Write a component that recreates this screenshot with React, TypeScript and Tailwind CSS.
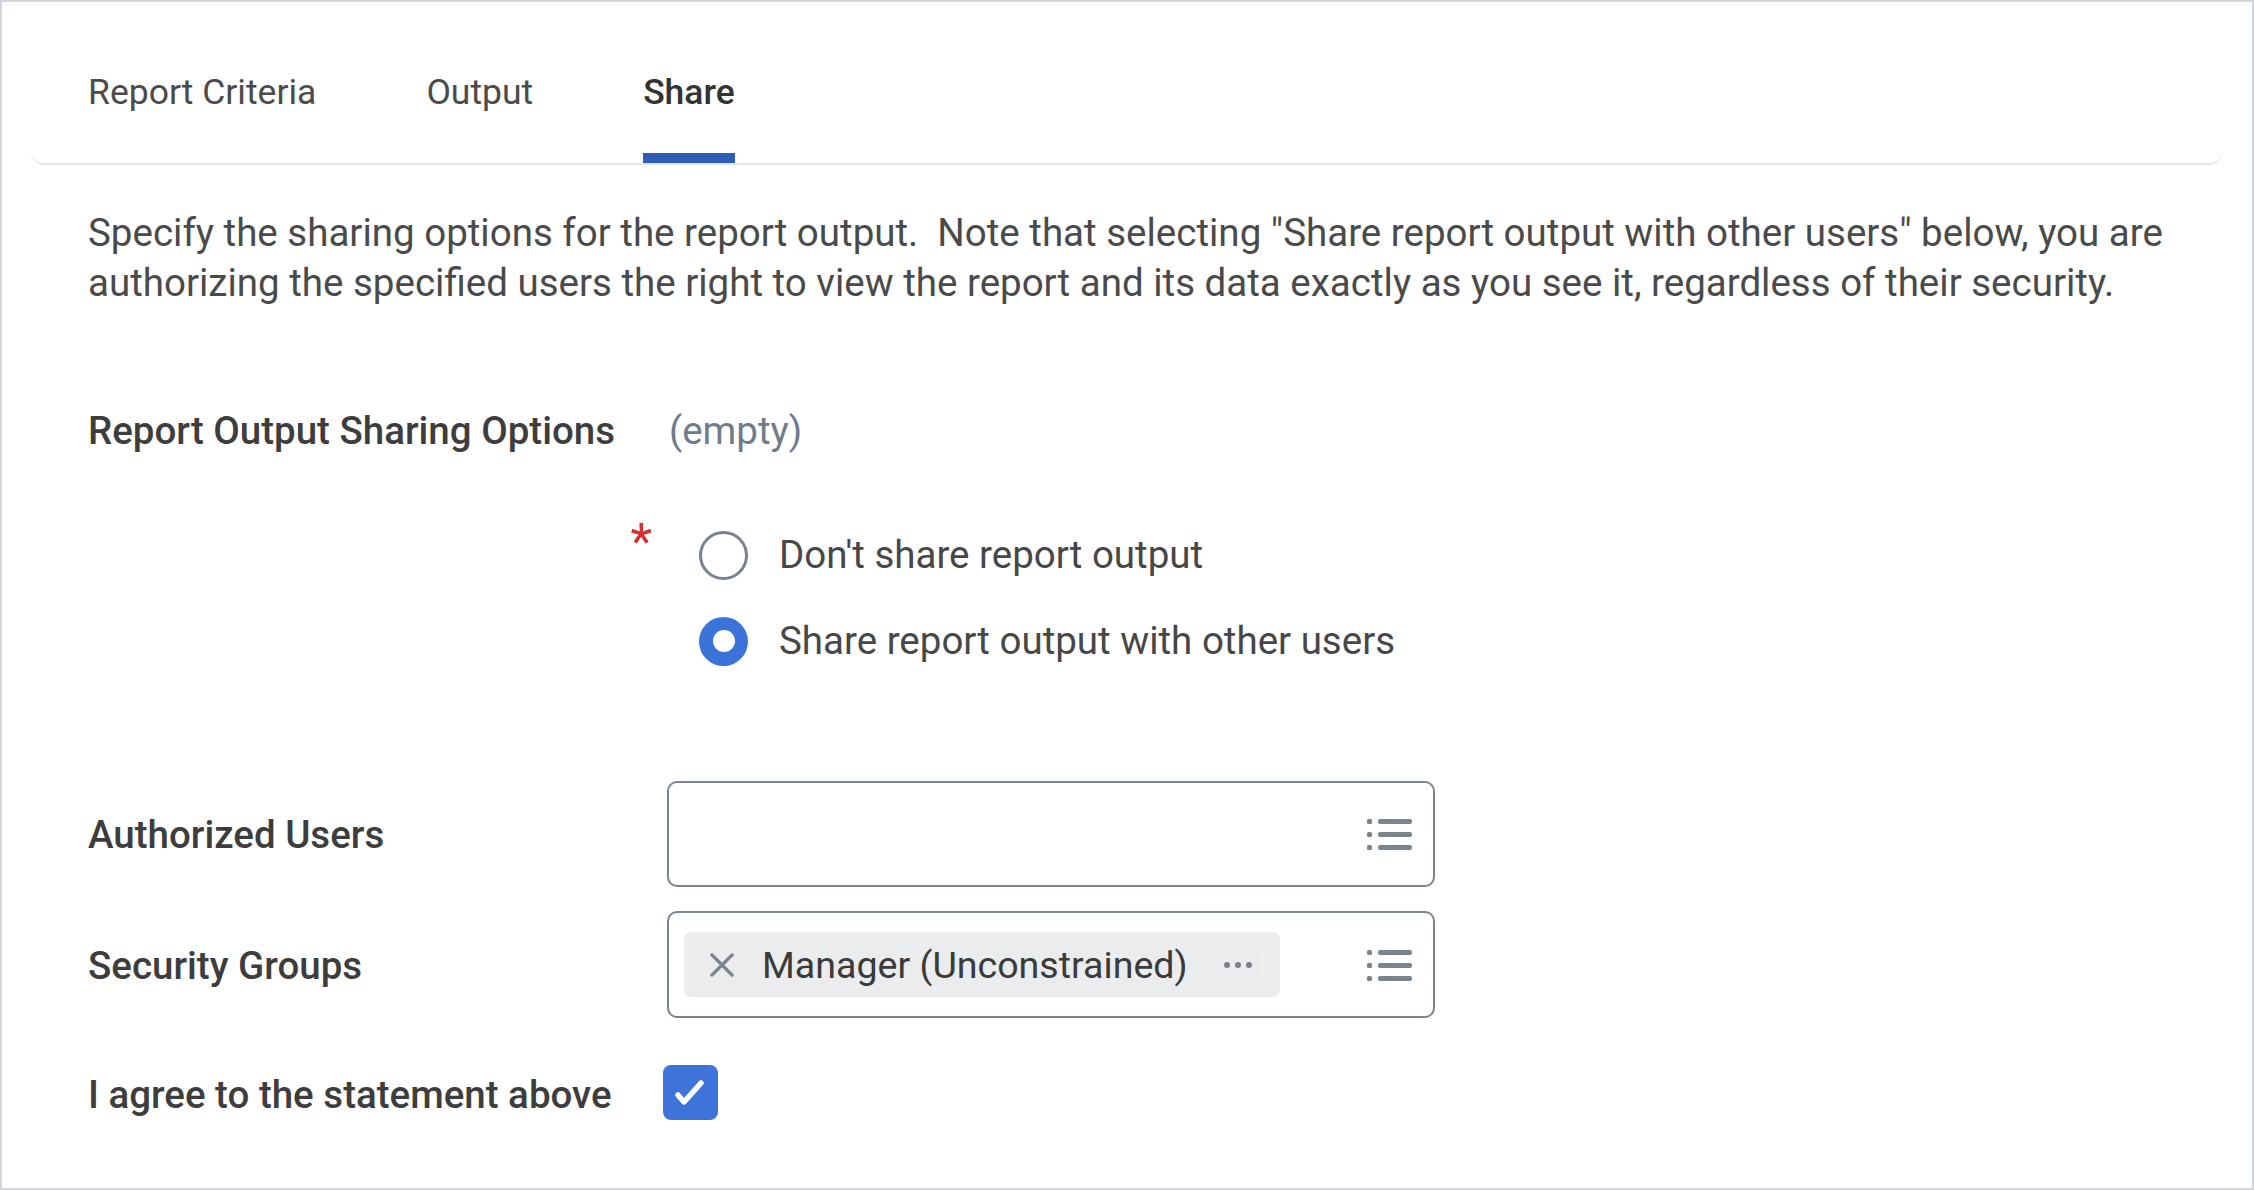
import React, { useState } from 'react';

type TabKey = 'criteria' | 'output' | 'share';

const tabs: { key: TabKey; label: string }[] = [
  { key: 'criteria', label: 'Report Criteria' },
  { key: 'output', label: 'Output' },
  { key: 'share', label: 'Share' },
];

const ListIcon: React.FC = () => (
  <svg width="45" height="34" viewBox="0 0 45 34" className="shrink-0">
    <rect x="0" y="2" width="5" height="5" rx="1.5" fill="#7b838d" />
    <rect x="11" y="2" width="34" height="5" rx="2" fill="#7b838d" />
    <rect x="0" y="15" width="5" height="5" rx="1.5" fill="#7b838d" />
    <rect x="11" y="15" width="34" height="5" rx="2" fill="#7b838d" />
    <rect x="0" y="28" width="5" height="5" rx="1.5" fill="#7b838d" />
    <rect x="11" y="28" width="34" height="5" rx="2" fill="#7b838d" />
  </svg>
);

const Radio: React.FC<{ checked: boolean }> = ({ checked }) =>
  checked ? (
    <span className="flex h-[49px] w-[49px] shrink-0 items-center justify-center rounded-full bg-[#3b73d9]">
      <span className="h-[22px] w-[22px] rounded-full bg-white" />
    </span>
  ) : (
    <span className="h-[49px] w-[49px] shrink-0 rounded-full border-[3px] border-[#7a828c]" />
  );

const App: React.FC = () => {
  const [tab, setTab] = useState<TabKey>('share');
  const [sharing, setSharing] = useState<'none' | 'share'>('share');
  const [agreed, setAgreed] = useState(true);

  return (
    <div className="h-screen w-full overflow-hidden border-2 border-[#d0d5db] bg-white font-['Roboto',sans-serif] text-[#474747]">
      {/* tab bar */}
      <div className="mx-[29px] flex h-[163px] items-stretch gap-[110px] rounded-b-[14px] border-b-2 border-[#e3e5e8] pl-[57px]">
        {tabs.map(t => (
          <button
            key={t.key}
            onClick={() => setTab(t.key)}
            className="flex flex-col justify-end"
          >
            <span
              className={`text-[35.5px] leading-[44px] ${tab === t.key ? 'font-medium text-[#333333]' : 'text-[#4b4b4b]'}`}
            >
              {t.label}
            </span>
            <span className={`mt-[39px] h-[10px] w-full ${tab === t.key ? 'bg-[#2f5cb8]' : 'bg-transparent'}`} />
          </button>
        ))}
      </div>

      <div className="pl-[86px]">
        <p className="mt-[43px] text-[38.5px] leading-[50px] text-[#4a4a4a]">
          Specify the sharing options for the report output.&nbsp; Note that selecting "Share report output with other users" below, you are
          <br />
          authorizing the specified users the right to view the report and its data exactly as you see it, regardless of their security.
        </p>

        {/* sharing options */}
        <div className="mt-[101px] flex h-[44px] items-center">
          <div className="w-[579px] text-[38.5px] font-medium leading-[44px] text-[#3d3d3d]">Report Output Sharing Options</div>
          <div className="pl-[2px] text-[38.5px] leading-[44px] text-[#6f7c8b]">(empty)</div>
        </div>

        <div className="mt-[59px] flex">
          <div className="flex w-[579px] justify-end pr-[15px] pt-[5px]">
            <span className="text-[50px] leading-[50px] text-[#d32f2f]">*</span>
          </div>
          <div className="flex flex-col pl-[32px]">
            <label className="flex h-[86px] cursor-pointer items-center gap-[31px]" onClick={() => setSharing('none')}>
              <Radio checked={sharing === 'none'} />
              <span className="text-[38.5px] leading-[44px] text-[#474747]">Don't share report output</span>
            </label>
            <label className="flex h-[86px] cursor-pointer items-center gap-[31px]" onClick={() => setSharing('share')}>
              <Radio checked={sharing === 'share'} />
              <span className="text-[38.5px] leading-[44px] text-[#474747]">Share report output with other users</span>
            </label>
          </div>
        </div>

        {/* authorized users */}
        <div className="mt-[97px] flex items-center">
          <div className="w-[579px] pt-[2px] text-[38.5px] font-medium leading-[44px] text-[#3d3d3d]">Authorized Users</div>
          <div className="flex h-[106px] w-[768px] items-center justify-end rounded-[10px] border-2 border-[#7d848e] pr-[21px]">
            <ListIcon />
          </div>
        </div>

        {/* security groups */}
        <div className="mt-[24px] flex items-center">
          <div className="w-[579px] pt-[2px] text-[38.5px] font-medium leading-[44px] text-[#3d3d3d]">Security Groups</div>
          <div className="flex h-[107px] w-[768px] items-center justify-between rounded-[10px] border-2 border-[#7d848e] pl-[15px] pr-[21px]">
            <div className="flex h-[65px] w-[596px] items-center rounded-[7px] bg-[#ebecee] pl-[26px] pr-[17px]">
              <svg width="24" height="24" viewBox="0 0 24 24" className="shrink-0">
                <path d="M2 2 L22 22 M22 2 L2 22" stroke="#7b8490" strokeWidth="3.2" strokeLinecap="square" />
              </svg>
              <span className="ml-[28px] flex-1 text-[37.6px] leading-[44px] text-[#3a3a3a]">Manager (Unconstrained)</span>
              <span className="flex h-[30px] w-[50px] items-center justify-center gap-[5px] rounded-[4px] border border-[#f2f3f4]">
                <span className="h-[6px] w-[6px] rounded-full bg-[#7a818b]" />
                <span className="h-[6px] w-[6px] rounded-full bg-[#7a818b]" />
                <span className="h-[6px] w-[6px] rounded-full bg-[#7a818b]" />
              </span>
            </div>
            <ListIcon />
          </div>
        </div>

        {/* agreement */}
        <div className="mt-[47px] flex items-center">
          <div className="w-[575px] pt-[4px] text-[38.5px] font-medium leading-[44px] text-[#3d3d3d]">I agree to the statement above</div>
          <button
            onClick={() => setAgreed(!agreed)}
            className={`flex h-[55px] w-[55px] items-center justify-center rounded-[8px] ${agreed ? 'bg-[#3e74d9]' : 'border-2 border-[#7a828c] bg-white'}`}
          >
            {agreed && (
              <svg width="55" height="55" viewBox="0 0 55 55">
                <path d="M15 30 L21 37 L38 18" fill="none" stroke="white" strokeWidth="5.5" strokeLinecap="round" strokeLinejoin="round" />
              </svg>
            )}
          </button>
        </div>
      </div>
    </div>
  );
};

export default App;
